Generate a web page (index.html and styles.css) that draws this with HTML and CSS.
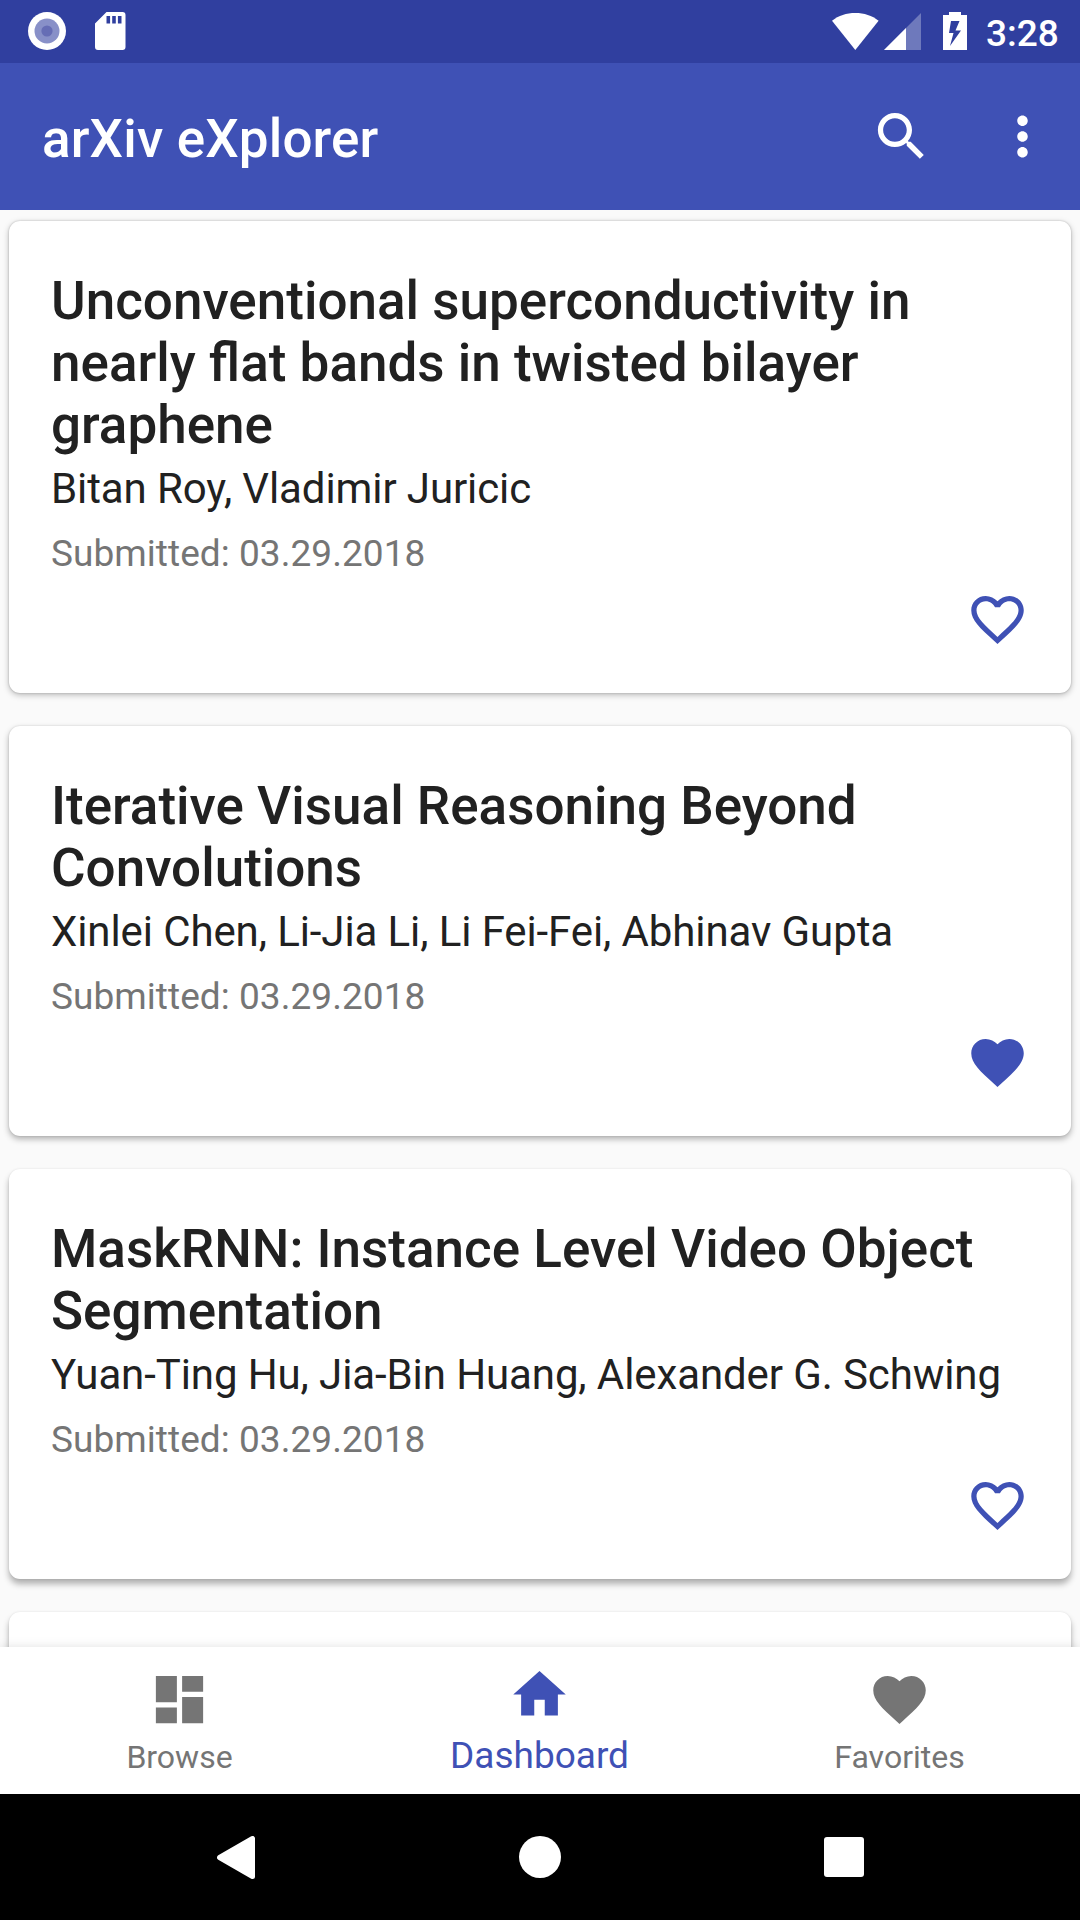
FILE: index.html
```html
<!DOCTYPE html>
<html lang="en">
<head>
<meta charset="utf-8">
<title>arXiv eXplorer</title>
<link rel="stylesheet" href="styles.css">
</head>
<body>
<svg class="defs" aria-hidden="true">
  <symbol id="heart" viewBox="0 0 24 24"><path d="M12 21.35l-1.45-1.32C5.4 15.36 2 12.28 2 8.5 2 5.42 4.42 3 7.5 3c1.74 0 3.41.81 4.5 2.09C13.09 3.81 14.76 3 16.5 3 19.58 3 22 5.42 22 8.5c0 3.78-3.4 6.86-8.55 11.54L12 21.35z"/></symbol>
  <symbol id="heart-outline" viewBox="0 0 24 24"><path d="M16.5 3c-1.74 0-3.41.81-4.5 2.09C10.91 3.81 9.24 3 7.5 3 4.42 3 2 5.42 2 8.5c0 3.78 3.4 6.86 8.55 11.54L12 21.35l1.45-1.32C18.6 15.36 22 12.28 22 8.5 22 5.42 19.58 3 16.5 3zm-4.4 15.55l-.1.1-.1-.1C7.14 14.24 4 11.39 4 8.5 4 6.5 5.5 5 7.5 5c1.54 0 3.04.99 3.57 2.36h1.87C13.46 5.99 14.96 5 16.5 5c2 0 3.5 1.5 3.5 3.5 0 2.89-3.14 5.74-7.9 10.05z"/></symbol>
</svg>
<div class="screen">
  <header class="status-bar">
    <svg class="status-record" viewBox="0 0 38 38"><circle cx="19" cy="19" r="19" fill="#fff"/><circle cx="19" cy="19" r="12.5" fill="#8890c8"/><circle cx="19" cy="19" r="5.6" fill="#666db5"/></svg>
    <svg class="status-sd" viewBox="0 0 31 38"><path fill="#fff" fill-rule="evenodd" d="M11.500 0H27.500a3 3 0 0 1 3 3V35a3 3 0 0 1-3 3H3a3 3 0 0 1-3-3V11.500zM11.500 4V11.500h3.600V4zM17.200 4V11.500h3.600V4zM22.900 4V11.500h3.600V4z"/></svg>
    <svg class="status-wifi" viewBox="0 0 47 38"><path fill="#fff" d="M0 8.800C6.500 3.500 14.500 1 23.300 1S40 3.500 46.600 8.800L23.300 38z"/></svg>
    <svg class="status-signal" viewBox="0 0 37 38"><path fill="#fff" fill-opacity=".3" d="M37 1V38H0z"/><path fill="#fff" d="M22 16V38H0z"/></svg>
    <svg class="status-battery" viewBox="0 0 24 38"><path fill="#fff" fill-rule="evenodd" d="M6 0H18V3H24V38H0V3H6zM8 9L6 21H10.500L7 34L18 18.500H12.500L16.500 9z"/></svg>
    <span class="clock">3:28</span>
  </header>
  <div class="app-bar">
    <h1 class="app-title">arXiv eXplorer</h1>
    <svg class="icon icon-search" viewBox="0 0 24 24"><path d="M15.500 14h-.79l-.28-.27C15.410 12.590 16 11.110 16 9.500 16 5.910 13.090 3 9.500 3S3 5.910 3 9.500 5.910 16 9.500 16c1.610 0 3.090-.59 4.230-1.570l.27.28v.79l5 4.990L20.490 19l-4.990-5zm-6 0C7.010 14 5 11.990 5 9.500S7.010 5 9.500 5 14 7.010 14 9.500 11.990 14 9.500 14z"/></svg>
    <svg class="icon icon-more" viewBox="0 0 24 24"><path d="M12 8c1.100 0 2-.9 2-2s-.9-2-2-2-2 .9-2 2 .9 2 2 2zm0 2c-1.100 0-2 .9-2 2s.9 2 2 2 2-.9 2-2-.9-2-2-2zm0 6c-1.100 0-2 .9-2 2s.9 2 2 2 2-.9 2-2-.9-2-2-2z"/></svg>
  </div>
  <main class="feed">
    <article class="card card-high">
      <h2 class="card-title">Unconventional superconductivity in nearly flat bands in twisted bilayer graphene</h2>
      <p class="authors">Bitan Roy, Vladimir Juricic</p>
      <p class="date">Submitted: 03.29.2018</p>
      <svg class="icon fav"><use href="#heart-outline"/></svg>
    </article>
    <article class="card card-mid">
      <h2 class="card-title">Iterative Visual Reasoning Beyond Convolutions</h2>
      <p class="authors">Xinlei Chen, Li-Jia Li, Li Fei-Fei, Abhinav Gupta</p>
      <p class="date">Submitted: 03.29.2018</p>
      <svg class="icon fav"><use href="#heart"/></svg>
    </article>
    <article class="card card-low">
      <h2 class="card-title">MaskRNN: Instance Level Video Object Segmentation</h2>
      <p class="authors">Yuan-Ting Hu, Jia-Bin Huang, Alexander G. Schwing</p>
      <p class="date">Submitted: 03.29.2018</p>
      <svg class="icon fav"><use href="#heart-outline"/></svg>
    </article>
    <article class="card card-low card-next"></article>
  </main>
  <nav class="tabs">
    <a class="tab"><svg class="icon" viewBox="0 0 24 24"><path d="M3 13h8V3H3v10zm0 8h8v-6H3v6zm10 0h8V11h-8v10zm0-18v6h8V3h-8z"/></svg><span>Browse</span></a>
    <a class="tab tab-active"><svg class="icon" viewBox="0 0 24 24"><path d="M10 20v-6h4v6h5v-8h3L12 3 2 12h3v8z"/></svg><span>Dashboard</span></a>
    <a class="tab"><svg class="icon"><use href="#heart"/></svg><span>Favorites</span></a>
  </nav>
  <footer class="system-bar">
    <svg class="sys-back" viewBox="0 0 38 43"><path d="M2.500 21.500L35.500 2.500V40.500z" fill="#fff" stroke="#fff" stroke-width="5" stroke-linejoin="round"/></svg>
    <span class="sys-home"></span>
    <span class="sys-recent"></span>
  </footer>
</div>
</body>
</html>
```
FILE: styles.css
```css
* { box-sizing: border-box; margin: 0; padding: 0; }
body { background: #fafafa; font-family: Roboto, "Liberation Sans", sans-serif; }
.defs { display: none; }
.screen { width: 1080px; height: 1920px; display: flex; flex-direction: column; overflow: hidden; }
.icon { display: block; width: 63px; height: 63px; flex: none; fill: currentColor; }

.status-bar { height: 63px; flex: none; background: #303f9f; display: flex; align-items: flex-start; padding: 12px 21px 0 28px; }
.status-bar svg { flex: none; height: 38px; display: block; }
.status-record { width: 38px; }
.status-sd { width: 31px; margin-left: 29px; }
.status-wifi { width: 47px; margin-left: auto; }
.status-signal { width: 37px; margin-left: 5px; }
.status-battery { width: 24px; margin-left: 22px; }
.clock { width: 73px; margin-left: 19px; font-size: 37px; line-height: 43px; font-weight: 500; color: #fff; }

.app-bar { height: 147px; flex: none; background: #3f51b5; color: #fff; display: flex; align-items: center; padding: 0 26px 0 42px; }
.app-title { flex: 1; font-size: 53px; line-height: 62px; font-weight: 500; letter-spacing: .15px; padding-top: 4px; }
.icon-more { margin-left: 58px; }

.feed { flex: 1; min-height: 0; overflow: hidden; display: flex; flex-direction: column; gap: 33px; padding: 11px 9px 0; }
.card { flex: none; display: flex; flex-direction: column; background: #fff; border-radius: 11px; padding: 49px 42px 42px; }
.card-high { box-shadow: 0 0 2px rgba(0,0,0,.24), 0 2px 6px rgba(0,0,0,.26); }
.card-mid { box-shadow: 0 0 2px rgba(0,0,0,.14), 0 3px 6px rgba(0,0,0,.3); }
.card-low { box-shadow: 0 0 2px rgba(0,0,0,.1), 0 5px 6px rgba(0,0,0,.3); }
.card-next { height: 410px; }
.card-title { font-size: 53px; line-height: 62px; font-weight: 500; color: #212121; }
.authors { margin-top: 8px; font-size: 42px; line-height: 49px; letter-spacing: -.1px; color: #212121; white-space: nowrap; }
.date { margin-top: 19px; font-size: 37px; line-height: 43px; letter-spacing: .05px; color: #757575; }
.fav { margin-top: 13px; align-self: flex-end; color: #3f51b5; }

.tabs { height: 147px; flex: none; display: flex; position: relative; background: #fff; box-shadow: 0 0 10px rgba(0,0,0,.12); }
.tab { flex: 1; display: flex; flex-direction: column; align-items: center; gap: 8px; padding: 21px 1px 0 0; font-size: 32px; line-height: 37px; color: #757575; }
.tab-active { padding-top: 16px; font-size: 37px; line-height: 43px; color: #3f51b5; }

.system-bar { height: 126px; flex: none; background: #000; display: flex; align-items: center; padding-left: 217px; }
.sys-back { width: 38px; height: 43px; }
.sys-home { width: 42px; height: 42px; margin-left: 264px; border-radius: 50%; background: #fff; }
.sys-recent { width: 40px; height: 40px; margin-left: 263px; border-radius: 3px; background: #fff; }
```
